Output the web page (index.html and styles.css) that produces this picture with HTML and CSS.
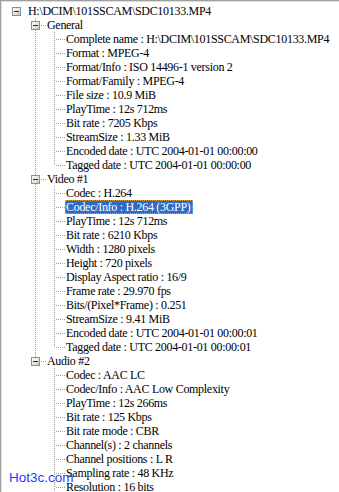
FILE: index.html
```html
<!DOCTYPE html>
<html>
<head>
<title>MediaInfo</title>
<link rel="stylesheet" href="styles.css">
</head>
<body>

<div class="tree">

  <div class="row">
    <span class="cell"><svg class="exp" width="9" height="9"><use href="#minus"/></svg></span>
    <span class="txt">H:\DCIM\101SSCAM\SDC10133.MP4</span>
  </div>

  <!-- General -->
  <div class="row">
    <span class="cell"></span>
    <span class="cell tee"><svg class="exp" width="9" height="9"><use href="#minus"/></svg></span>
    <span class="txt">General</span>
  </div>
  <div class="row"><span class="cell"></span><span class="cell v"></span><span class="cell tee"></span><span class="txt">Complete name : H:\DCIM\101SSCAM\SDC10133.MP4</span></div>
  <div class="row"><span class="cell"></span><span class="cell v"></span><span class="cell tee"></span><span class="txt">Format : MPEG-4</span></div>
  <div class="row"><span class="cell"></span><span class="cell v"></span><span class="cell tee"></span><span class="txt">Format/Info : ISO 14496-1 version 2</span></div>
  <div class="row"><span class="cell"></span><span class="cell v"></span><span class="cell tee"></span><span class="txt">Format/Family : MPEG-4</span></div>
  <div class="row"><span class="cell"></span><span class="cell v"></span><span class="cell tee"></span><span class="txt">File size : 10.9 MiB</span></div>
  <div class="row"><span class="cell"></span><span class="cell v"></span><span class="cell tee"></span><span class="txt">PlayTime : 12s 712ms</span></div>
  <div class="row"><span class="cell"></span><span class="cell v"></span><span class="cell tee"></span><span class="txt">Bit rate : 7205 Kbps</span></div>
  <div class="row"><span class="cell"></span><span class="cell v"></span><span class="cell tee"></span><span class="txt">StreamSize : 1.33 MiB</span></div>
  <div class="row"><span class="cell"></span><span class="cell v"></span><span class="cell tee"></span><span class="txt">Encoded date : UTC 2004-01-01 00:00:00</span></div>
  <div class="row"><span class="cell"></span><span class="cell v"></span><span class="cell end"></span><span class="txt">Tagged date : UTC 2004-01-01 00:00:00</span></div>

  <!-- Video -->
  <div class="row">
    <span class="cell"></span>
    <span class="cell tee"><svg class="exp" width="9" height="9"><use href="#minus"/></svg></span>
    <span class="txt">Video #1</span>
  </div>
  <div class="row"><span class="cell"></span><span class="cell v"></span><span class="cell tee"></span><span class="txt">Codec : H.264</span></div>
  <div class="row"><span class="cell"></span><span class="cell v"></span><span class="cell tee"></span><span class="txt selected">Codec/Info : H.264 (3GPP)</span></div>
  <div class="row"><span class="cell"></span><span class="cell v"></span><span class="cell tee"></span><span class="txt">PlayTime : 12s 712ms</span></div>
  <div class="row"><span class="cell"></span><span class="cell v"></span><span class="cell tee"></span><span class="txt">Bit rate : 6210 Kbps</span></div>
  <div class="row"><span class="cell"></span><span class="cell v"></span><span class="cell tee"></span><span class="txt">Width : 1280 pixels</span></div>
  <div class="row"><span class="cell"></span><span class="cell v"></span><span class="cell tee"></span><span class="txt">Height : 720 pixels</span></div>
  <div class="row"><span class="cell"></span><span class="cell v"></span><span class="cell tee"></span><span class="txt">Display Aspect ratio : 16/9</span></div>
  <div class="row"><span class="cell"></span><span class="cell v"></span><span class="cell tee"></span><span class="txt">Frame rate : 29.970 fps</span></div>
  <div class="row"><span class="cell"></span><span class="cell v"></span><span class="cell tee"></span><span class="txt">Bits/(Pixel*Frame) : 0.251</span></div>
  <div class="row"><span class="cell"></span><span class="cell v"></span><span class="cell tee"></span><span class="txt">StreamSize : 9.41 MiB</span></div>
  <div class="row"><span class="cell"></span><span class="cell v"></span><span class="cell tee"></span><span class="txt">Encoded date : UTC 2004-01-01 00:00:01</span></div>
  <div class="row"><span class="cell"></span><span class="cell v"></span><span class="cell end"></span><span class="txt">Tagged date : UTC 2004-01-01 00:00:01</span></div>

  <!-- Audio -->
  <div class="row">
    <span class="cell"></span>
    <span class="cell end"><svg class="exp" width="9" height="9"><use href="#minus"/></svg></span>
    <span class="txt">Audio #2</span>
  </div>
  <div class="row"><span class="cell"></span><span class="cell"></span><span class="cell tee"></span><span class="txt">Codec : AAC LC</span></div>
  <div class="row"><span class="cell"></span><span class="cell"></span><span class="cell tee"></span><span class="txt">Codec/Info : AAC Low Complexity</span></div>
  <div class="row"><span class="cell"></span><span class="cell"></span><span class="cell tee"></span><span class="txt">PlayTime : 12s 266ms</span></div>
  <div class="row"><span class="cell"></span><span class="cell"></span><span class="cell tee"></span><span class="txt">Bit rate : 125 Kbps</span></div>
  <div class="row"><span class="cell"></span><span class="cell"></span><span class="cell tee"></span><span class="txt">Bit rate mode : CBR</span></div>
  <div class="row"><span class="cell"></span><span class="cell"></span><span class="cell tee"></span><span class="txt">Channel(s) : 2 channels</span></div>
  <div class="row"><span class="cell"></span><span class="cell"></span><span class="cell tee"></span><span class="txt">Channel positions : L R</span></div>
  <div class="row"><span class="cell"></span><span class="cell"></span><span class="cell tee"></span><span class="txt">Sampling rate : 48 KHz</span></div>
  <div class="row"><span class="cell"></span><span class="cell"></span><span class="cell tee"></span><span class="txt">Resolution : 16 bits</span></div>
  <div class="row"><span class="cell"></span><span class="cell"></span><span class="cell tee"></span><span class="txt"></span></div>

  <div class="watermark">Hot3c.com</div>
</div>

<svg width="0" height="0" class="defs">
  <defs>
    <linearGradient id="btn" x1="0" y1="0" x2="1" y2="1">
      <stop offset="0" stop-color="#ffffff"/>
      <stop offset="0.6" stop-color="#e6e2d8"/>
      <stop offset="1" stop-color="#c4b89c"/>
    </linearGradient>
    <g id="minus">
      <rect x="0.5" y="0.5" width="8" height="8" fill="url(#btn)" stroke="#7a93b4"/>
      <rect x="2" y="4" width="5" height="1" fill="#1c2b4a"/>
    </g>
  </defs>
</svg>

</body>
</html>
```

FILE: styles.css
```css
html,
body {
  margin: 0;
  padding: 0;
  background-color: #fff;
  height: 100%;
  overflow: hidden;
}

.tree {
  position: relative;
  height: 100%;
  border-top: 1px solid #a0a0a0;
  border-left: 1px solid #a0a0a0;
  box-shadow: inset 1px 1px 0 #dcdcdc;
  padding: 3px 0 0 7px;
  box-sizing: border-box;
  font-family: "Liberation Serif", "Times New Roman", serif;
  font-size: 12px;
  letter-spacing: -0.3px;
  color: #000;
}

.row {
  display: flex;
  height: 14px;
  line-height: 14px;
  white-space: nowrap;
}

.cell {
  flex: none;
  width: 19px;
  height: 14px;
  background-repeat: no-repeat;
}

/* dotted tree lines */
.cell.v {
  background-image: repeating-linear-gradient(#a0a0a0 0 1px, transparent 1px 2px);
  background-size: 1px 14px;
  background-position: 8px 0;
}

.cell.tee {
  background-image:
    repeating-linear-gradient(#a0a0a0 0 1px, transparent 1px 2px),
    repeating-linear-gradient(to right, #a0a0a0 0 1px, transparent 1px 2px);
  background-size: 1px 14px, 9px 1px;
  background-position: 8px 0, 10px 7px;
}

.cell.end {
  background-image:
    repeating-linear-gradient(#a0a0a0 0 1px, transparent 1px 2px),
    repeating-linear-gradient(to right, #a0a0a0 0 1px, transparent 1px 2px);
  background-size: 1px 8px, 9px 1px;
  background-position: 8px 0, 10px 7px;
}

.exp {
  display: block;
  margin: 3px 0 0 4px;
}

.txt {
  padding: 0 2px 0 1px;
}

.selected {
  background-color: #316ac5;
  color: #fff;
  outline: 1px dotted #d9a441;
  outline-offset: -1px;
}

.watermark {
  position: absolute;
  left: 8px;
  top: 469px;
  font-family: "Liberation Sans", Arial, sans-serif;
  font-size: 13.5px;
  letter-spacing: 0;
  color: #1c3cff;
}

.defs {
  position: absolute;
}
```
